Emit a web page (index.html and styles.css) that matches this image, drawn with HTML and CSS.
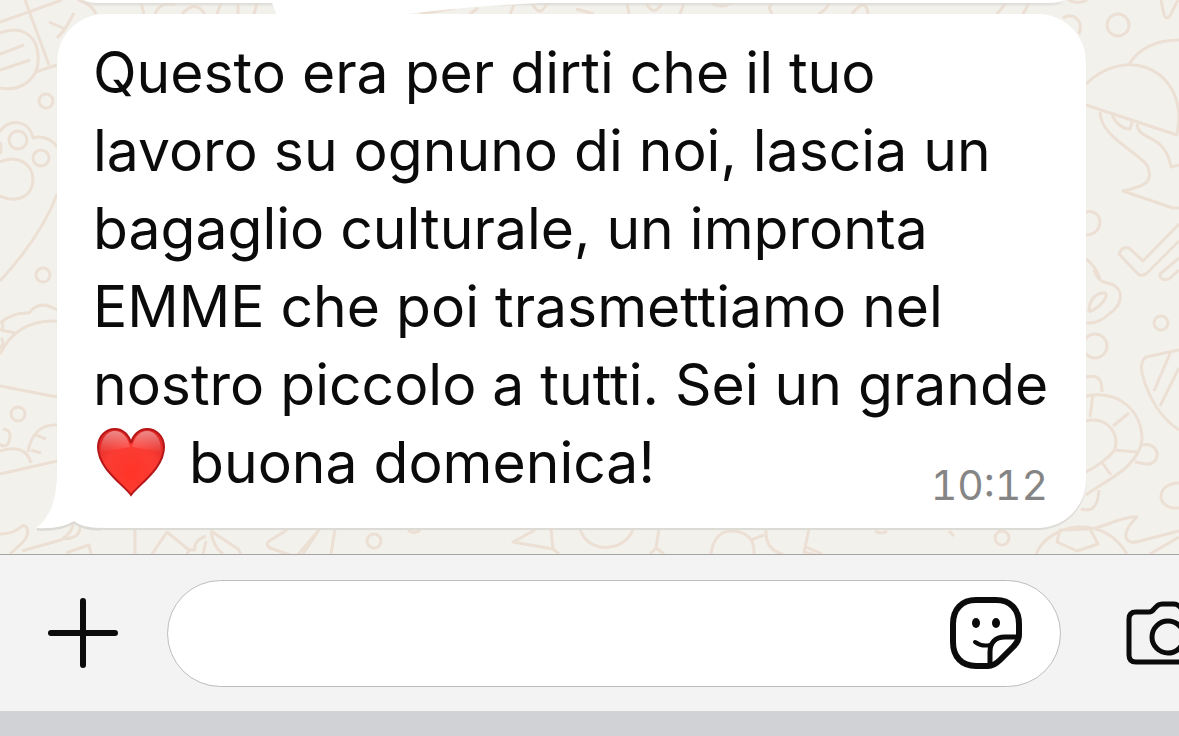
FILE: index.html
```html
<!DOCTYPE html>
<html lang="it">
<head>
<meta charset="UTF-8" />
<meta name="viewport" content="width=device-width, initial-scale=1" />
<title>Chat</title>
<link rel="stylesheet" href="styles.css">
</head>
<body>
<main class="chat">
  <!-- sfondo con disegni -->
  <svg class="wallpaper" viewBox="0 0 1179 554" preserveAspectRatio="xMidYMax slice" aria-hidden="true">
    <!-- lato sinistro -->
    <path d="M0 22 L62 0 M25 0 L49 65 M35 72 L57 65 M49 22 L65 29 L74 13 M65 29 L57 38 M78 0 Q92 4 96 14" />
    <path d="M0 33 C20 25 37 34 38 56 C40 78 22 92 0 88 M0 54 L24 45 M0 70 L30 60" />
    <circle cx="46" cy="101" r="7" />
    <circle cx="18" cy="140" r="9" />
    <circle cx="41" cy="158" r="8" />
    <path d="M0 132 C6 119 29 118 33 138 C43 135 53 140 57 147 M0 142 Q2 148 0 154 M0 162 C16 154 33 163 33 180 C32 198 16 203 0 196" />
    <path d="M57 194 Q42 235 0 281" />
    <circle cx="43" cy="275" r="7" />
    <path d="M0 323 Q13 312 29 313 Q39 299 57 310 M0 354 C12 329 32 320 57 321 M2 321 Q4 328 1 330 L15 333 M1 338 Q5 342 0 349" />
    <path d="M0 386 L57 397" />
    <circle cx="18" cy="414" r="7" />
    <path d="M3 429 Q14 430 8 444 Q3 448 0 444 M0 451 Q25 443 31 463 M28 452 C31 433 42 424 57 425 M36 435 L46 439 M31 450 L41 453 M0 474 L57 461" />
    <path d="M0 534 Q14 534 22 526 C29 524 30 535 22 543 L10 554 M22 551 Q50 543 61 540 Q72 533 73 524 M80 527 Q80 539 62 539 M66 553 L89 545 L91 554" />

    <!-- striscia in alto -->
    <path d="M141 3 L144 14 M155 14 Q160 1 175 5 M182 14 Q195 -1 205 14 M221 3 L217 14 M238 3 V14 M257 3 L254 14" />
    <path d="M420 14 L455 8 M470 14 L478 8 M510 14 L514 5 M532 3 Q540 19 547 3 M576 9 L594 14 M627 3 L629 14 M646 3 Q654 18 662 3 M684 3 L680 14 M711 3 Q721 9 732 3 M772 3 L769 8 L772 14 M829 3 Q827 10 818 14 M852 14 Q866 -4 868 14 M1006 3 L997 14 M1029 3 L1023 14" />

    <!-- lato destro -->
    <path d="M1063 18 C1073 12 1084 20 1079 34 M1068 0 Q1078 5 1087 0 M1161 0 L1164 15 Q1167 21 1171 14 L1178 0" />
    <circle cx="1118" cy="25" r="11" />
    <path d="M1086 84 C1124 47 1179 66 1179 119 L1177 135 L1086 105 M1129 64 Q1145 40 1179 40" />
    <path d="M1100 112 C1101 137 1136 151 1147 165 C1154 181 1147 186 1123 191 L1173 208 L1179 208 M1112 115 Q1119 129 1130 129 L1132 122 M1137 124 C1138 142 1165 132 1171 167 L1179 165" />
    <path d="M1086 212 C1104 208 1105 235 1086 235 M1086 259 Q1095 265 1100 279" />
    <path d="M1179 224 L1143 261 L1129 248 Q1122 246 1119 254 L1138 274 Q1142 277 1147 273 L1179 241 M1179 258 L1160 274 Q1159 281 1169 279 L1179 270" />
    <path d="M1094 270 Q1098 282 1107 283 C1124 286 1125 303 1109 314 Q1099 324 1086 323 M1089 312 C1089 301 1095 292 1105 293 C1109 296 1101 307 1089 312" />
    <circle cx="1161" cy="323" r="7" />
    <circle cx="1095" cy="346" r="12" />
    <path d="M1179 350 L1146 357 Q1140 361 1142 373 Q1152 412 1179 430 M1171 351 L1154 391 M1179 368 L1160 406" />
    <path d="M1086 377 C1100 374 1102 381 1102 392 M1086 396 C1121 389 1142 413 1142 440 C1138 469 1102 482 1086 495 M1086 421 C1108 416 1121 435 1114 451 Q1105 462 1086 472 M1093 394 L1090 417 M1129 413 L1113 426 M1115 450 L1137 452 M1101 461 L1111 475" />
    <path d="M1142 445 C1161 441 1162 465 1146 464 L1135 462 M1099 490 C1098 505 1093 513 1081 509 M1179 483 C1155 483 1155 510 1179 508" />

    <!-- striscia in basso -->
    <path d="M135 528 V554 M152 554 L167 532 L189 550 H195 Q193 541 206 536 M211 531 Q213 547 223 554 M211 531 L238 549 L241 554 M189 550 L187 554 M206 541 L203 554" />
    <path d="M287 530 L269 541 Q265 545 270 548 L296 557 L319 530 L303 554 M335 529 L331 554" />
    <circle cx="374" cy="541" r="7" />
    <path d="M408 530 Q414 535 420 530 M535 530 L513 542 L553 549 L551 529 M553 549 L559 554 M580 529 C588 555 626 552 633 529" />
    <path d="M659 529 L656 548 L650 554 M656 548 L664 554 M711 554 C713 539 721 530 732 531 Q755 532 754 554 M751 540 L764 535 M766 529 C765 546 774 552 783 554 M809 529 L804 552 L823 557 M806 547 L822 554 M875 531 Q881 535 887 531 M949 531 L954 536" />
    <circle cx="1002" cy="538" r="7" />
    <path d="M1036 554 C1050 522 1104 514 1127 554 M1060 530 L1090 529 L1098 544 L1077 551 L1057 542 Z M1095 528 C1110 525 1122 516 1137 517 C1119 535 1125 546 1140 541 L1179 531 M1150 554 L1179 537" />
  </svg>

  <!-- coda del messaggio precedente -->
  <svg class="previous" viewBox="0 0 1179 16" preserveAspectRatio="xMidYMin slice" aria-hidden="true">
    <path class="edge" d="M84 0 Q90 3 98 3 H1048 Q1058 3 1064 0 Z" />
    <path class="fill" d="M271 0 L277 16 H390 Q470 6 541 3 V0 Z" />
  </svg>

  <article class="bubble">
    <svg class="tail" viewBox="0 0 70 82" aria-hidden="true">
      <path class="shade" d="M1 79 C18 80 30 77 38 72 Q46 79 65 79" />
      <path class="fill" d="M21 0 V20 C21 48 15 67 0 78 C18 79 30 76 38 71 Q46 78 65 78 V0 Z" />
    </svg>
    <p class="message">Questo era per dirti che il tuo<br>
      lavoro su ognuno di noi, lascia un<br>
      bagaglio culturale, un impronta<br>
      EMME che poi trasmettiamo nel<br>
      nostro piccolo a tutti. Sei un grande<br>
      <svg class="heart" viewBox="0 0 80 70" role="img" aria-label="cuore rosso">
        <defs>
          <radialGradient id="heartBase" cx="50%" cy="65%" r="65%">
            <stop offset="0" stop-color="#ff3526" />
            <stop offset="0.6" stop-color="#fb3c34" />
            <stop offset="1" stop-color="#e02a27" />
          </radialGradient>
          <linearGradient id="heartShine" x1="0" y1="0" x2="0" y2="1">
            <stop offset="0" stop-color="#fff" stop-opacity="0.45" />
            <stop offset="1" stop-color="#fff" stop-opacity="0" />
          </linearGradient>
        </defs>
        <path d="M38 68 C31 58 5 42 5 20 C5 9 13 2 22 2 C30 2 36 8 38 16 C40 8 46 2 54 2 C63 2 71 9 71 20 C71 42 45 58 38 68 Z" fill="url(#heartBase)" stroke="#b51618" stroke-width="2" />
        <path d="M8 26 C7 11 15 4 22 4 C29 4 34 9 37 20 Q22 22 8 26 Z M39 20 C42 9 47 4 54 4 C61 4 69 11 68 26 Q54 22 39 20 Z" fill="url(#heartShine)" />
      </svg> buona domenica!</p>
    <time class="time" datetime="10:12">10:12</time>
  </article>
</main>

<form class="composer">
  <button type="button" class="icon-btn" aria-label="Aggiungi allegato">
    <svg class="icon" viewBox="0 0 72 72"><path d="M36 4 V68 M4 36 H68" /></svg>
  </button>
  <div class="field">
    <input type="text" class="field-input" aria-label="Messaggio">
    <button type="button" class="icon-btn" aria-label="Adesivi">
      <svg class="icon" viewBox="0 0 72 72">
        <path d="M69 38 V27 C69 12 60 3 46 3 H26 C12 3 3 12 3 27 V45 C3 60 12 69 26 69 H38 C43 69 46 67 50 63 L63 50 C67 46 69 43 69 38 Z" />
        <path class="fold" d="M68 40 H55 C45 40 40 46 40 55 V67" />
        <path class="smile" d="M25 45 Q32 50 40 48" />
        <ellipse class="eye" cx="26" cy="26" rx="4" ry="5" />
        <ellipse class="eye" cx="46" cy="26" rx="4" ry="5" />
      </svg>
    </button>
  </div>
  <button type="button" class="icon-btn camera-btn" aria-label="Fotocamera">
    <svg class="icon camera" viewBox="0 0 86 72">
      <path d="M4 22 Q4 15 11 15 H24 Q27 15 29 12 L32 9 Q34 7 38 7 H48 Q52 7 54 9 L57 12 Q59 15 62 15 H75 Q82 15 82 22 V58 Q82 65 75 65 H11 Q4 65 4 58 Z" />
      <circle cx="43" cy="40" r="16" />
    </svg>
  </button>
</form>
<div class="keyboard"></div>
</body>
</html>
```

FILE: styles.css
```css
* {
  box-sizing: border-box;
}
body {
  margin: 0;
  min-height: 100vh;
  display: flex;
  flex-direction: column;
  overflow-x: hidden;
  font-family: Inter, "Liberation Sans", sans-serif;
  background: #d1d2d6;
  color: #0b0b0b;
}

/* Area messaggi */
.chat {
  position: relative;
  padding: 14px 93px 26px 57px;
  background: #f3f1ec;
  overflow: hidden;
}
.wallpaper {
  position: absolute;
  inset: 0;
  width: 100%;
  height: 100%;
  fill: none;
  stroke: #ecdfd4;
  stroke-width: 3;
  stroke-linejoin: round;
}
.previous {
  position: absolute;
  top: 0;
  left: 0;
  width: 100%;
  height: 16px;
}
.fill {
  fill: #fff;
}
.edge {
  fill: #fff;
  filter: drop-shadow(0 2px 1px #dcdad4);
}
.shade {
  fill: none;
  stroke: #dcdad4;
  stroke-width: 3;
}

/* Messaggio */
.bubble {
  position: relative;
  padding: 20px 36px 26px 36px;
  background: #fff;
  border-radius: 48px;
  box-shadow: 0 2px 1px #dcdad4;
}
.tail {
  position: absolute;
  left: -21px;
  bottom: -4px;
  width: 70px;
  height: 82px;
}
.message {
  position: relative;
  margin: 0;
  font-size: 57px;
  line-height: 78px;
  white-space: nowrap;
}
.heart {
  width: 80px;
  height: 70px;
  vertical-align: -14px;
}
.time {
  position: absolute;
  right: 38px;
  bottom: 17px;
  font-size: 41px;
  line-height: 52px;
  font-variant-numeric: tabular-nums;
  color: #858585;
}

/* Barra di scrittura */
.composer {
  display: flex;
  align-items: center;
  height: 157px;
  padding-left: 47px;
  background: #f3f3f3;
  border-top: 1px solid #a5a5a5;
  overflow: hidden;
}
.field {
  flex: 1;
  min-width: 0;
  display: flex;
  align-items: center;
  height: 107px;
  margin: 0 64px 0 48px;
  padding: 0 38px 0 48px;
  background: #fff;
  border: 1px solid #bdbdbd;
  border-radius: 54px;
}
.field-input {
  flex: 1;
  width: 100%;
  min-width: 0;
  border: none;
  outline: none;
  background: none;
  font: inherit;
  font-size: 57px;
}
.icon-btn {
  flex: none;
  padding: 0;
  border: none;
  background: none;
  cursor: pointer;
}
.camera-btn {
  margin-right: -32px;
}
.icon {
  display: block;
  width: 72px;
  height: 72px;
  fill: none;
  stroke: #0b0b0b;
  stroke-width: 6;
  stroke-linecap: round;
  stroke-linejoin: round;
}
.camera {
  width: 86px;
  stroke-width: 5;
}
.fold {
  stroke-width: 5;
}
.smile {
  stroke-width: 4;
}
.eye {
  fill: #0b0b0b;
  stroke: none;
}

/* Tastiera */
.keyboard {
  flex: 1;
  min-height: 25px;
  background: #d1d2d6;
}
```
